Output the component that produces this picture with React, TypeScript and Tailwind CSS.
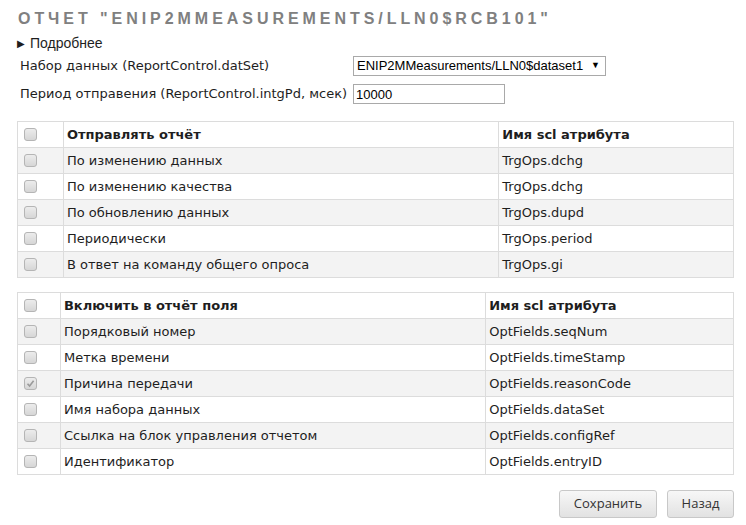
import React from 'react'

const verdana = { fontFamily: '"DejaVu Sans", Verdana, sans-serif' }

type Row = { label: string; attr: string; checked?: boolean }

const triggers: Row[] = [
  { label: 'По изменению данных', attr: 'TrgOps.dchg' },
  { label: 'По изменению качества', attr: 'TrgOps.dchg' },
  { label: 'По обновлению данных', attr: 'TrgOps.dupd' },
  { label: 'Периодически', attr: 'TrgOps.period' },
  { label: 'В ответ на команду общего опроса', attr: 'TrgOps.gi' },
]

const fields: Row[] = [
  { label: 'Порядковый номер', attr: 'OptFields.seqNum' },
  { label: 'Метка времени', attr: 'OptFields.timeStamp' },
  { label: 'Причина передачи', attr: 'OptFields.reasonCode', checked: true },
  { label: 'Имя набора данных', attr: 'OptFields.dataSet' },
  { label: 'Ссылка на блок управления отчетом', attr: 'OptFields.configRef' },
  { label: 'Идентификатор', attr: 'OptFields.entryID' },
]

function Checkbox({ checked }: { checked?: boolean }) {
  return (
    <span className="flex w-[13px] h-[13px] items-center justify-center rounded-[3px] border border-[#b5b5b5] bg-gradient-to-b from-[#ececec] to-[#d6d6d6]">
      {checked && (
        <svg width="9" height="9" viewBox="0 0 9 9">
          <path d="M1.5 4.8 L3.6 7 L7.6 1.8" fill="none" stroke="#9a9a9a" strokeWidth="1.6" />
        </svg>
      )}
    </span>
  )
}

function OptionTable({ title, rows, widths }: { title: string; rows: Row[]; widths: [string, string, string] }) {
  return (
    <table className="w-[717px] border-collapse text-[13px] text-[#1e1e1e]" style={verdana}>
      <colgroup>
        <col className={widths[0]} />
        <col className={widths[1]} />
        <col className={widths[2]} />
      </colgroup>
      <thead>
        <tr className="h-[26px] bg-white">
          <th className="border border-[#dcdcdc] pl-[6px] align-middle">
            <Checkbox />
          </th>
          <th className="border border-[#dcdcdc] px-[3px] text-left font-bold">{title}</th>
          <th className="border border-[#dcdcdc] px-[3px] text-left font-bold">Имя scl атрибута</th>
        </tr>
      </thead>
      <tbody>
        {rows.map((r, i) => (
          <tr key={r.attr + i} className={i % 2 === 0 ? 'h-[26px] bg-[#f3f3f3]' : 'h-[26px] bg-white'}>
            <td className="border border-[#dcdcdc] pl-[6px] align-middle">
              <Checkbox checked={r.checked} />
            </td>
            <td className="border border-[#dcdcdc] px-[3px]">{r.label}</td>
            <td className="border border-[#dcdcdc] px-[3px]">{r.attr}</td>
          </tr>
        ))}
      </tbody>
    </table>
  )
}

export default function App() {
  return (
    <div className="w-[746px] h-[525px] bg-white pl-[17px] pt-[9px]" style={{ fontFamily: '"Liberation Sans", Arial, sans-serif' }}>
      <h1 className="text-[16px] font-bold leading-[20px] uppercase tracking-[3.95px] text-[#808080] pl-[1px]">
        Отчет "ENIP2MMeasurements/LLN0$RCB101"
      </h1>

      <div className="mt-[6px] flex items-center gap-[5px] text-[14px] text-[#1e1e1e] h-[16px]">
        <span className="text-[10px]">▶</span>
        <span>Подробнее</span>
      </div>

      <div className="mt-[5px] flex flex-col gap-[8px] text-[13px] text-[#1e1e1e] pl-[3px]" style={verdana}>
        <div className="flex items-center h-[20px]">
          <span className="w-[333px]">Набор данных (ReportControl.datSet)</span>
          <div
            className="flex items-center justify-between w-[253px] h-[20px] border border-[#a9a9a9] bg-white pl-[3px] pr-[5px] text-[13px] text-black"
            style={{ fontFamily: '"Liberation Sans", Arial, sans-serif' }}
          >
            <span>ENIP2MMeasurements/LLN0$dataset1</span>
            <span className="text-[9px]">▼</span>
          </div>
        </div>
        <div className="flex items-center h-[20px]">
          <span className="w-[333px]">Период отправения (ReportControl.intgPd, мсек)</span>
          <input
            readOnly
            value="10000"
            className="w-[152px] h-[20px] border border-[#a9a9a9] bg-white px-[2px] text-[13px] text-black outline-none"
            style={{ fontFamily: '"Liberation Sans", Arial, sans-serif' }}
          />
        </div>
      </div>

      <div className="mt-[17px]">
        <OptionTable title="Отправлять отчёт" rows={triggers} widths={['w-[46px]', 'w-[436px]', 'w-[235px]']} />
      </div>

      <div className="mt-[14px]">
        <OptionTable title="Включить в отчёт поля" rows={fields} widths={['w-[43px]', 'w-[426px]', 'w-[248px]']} />
      </div>

      <div className="mt-[15px] flex justify-end gap-[10px] w-[717px]" style={{ fontFamily: '"Open Sans", sans-serif' }}>
        <button className="h-[28px] w-[98px] rounded-[3px] border border-[#c8c8c8] bg-gradient-to-b from-[#f7f7f7] to-[#e2e2e2] text-[13px] text-[#333]">
          Сохранить
        </button>
        <button className="h-[28px] w-[67px] rounded-[3px] border border-[#c8c8c8] bg-gradient-to-b from-[#f7f7f7] to-[#e2e2e2] text-[13px] text-[#333]">
          Назад
        </button>
      </div>
    </div>
  )
}
